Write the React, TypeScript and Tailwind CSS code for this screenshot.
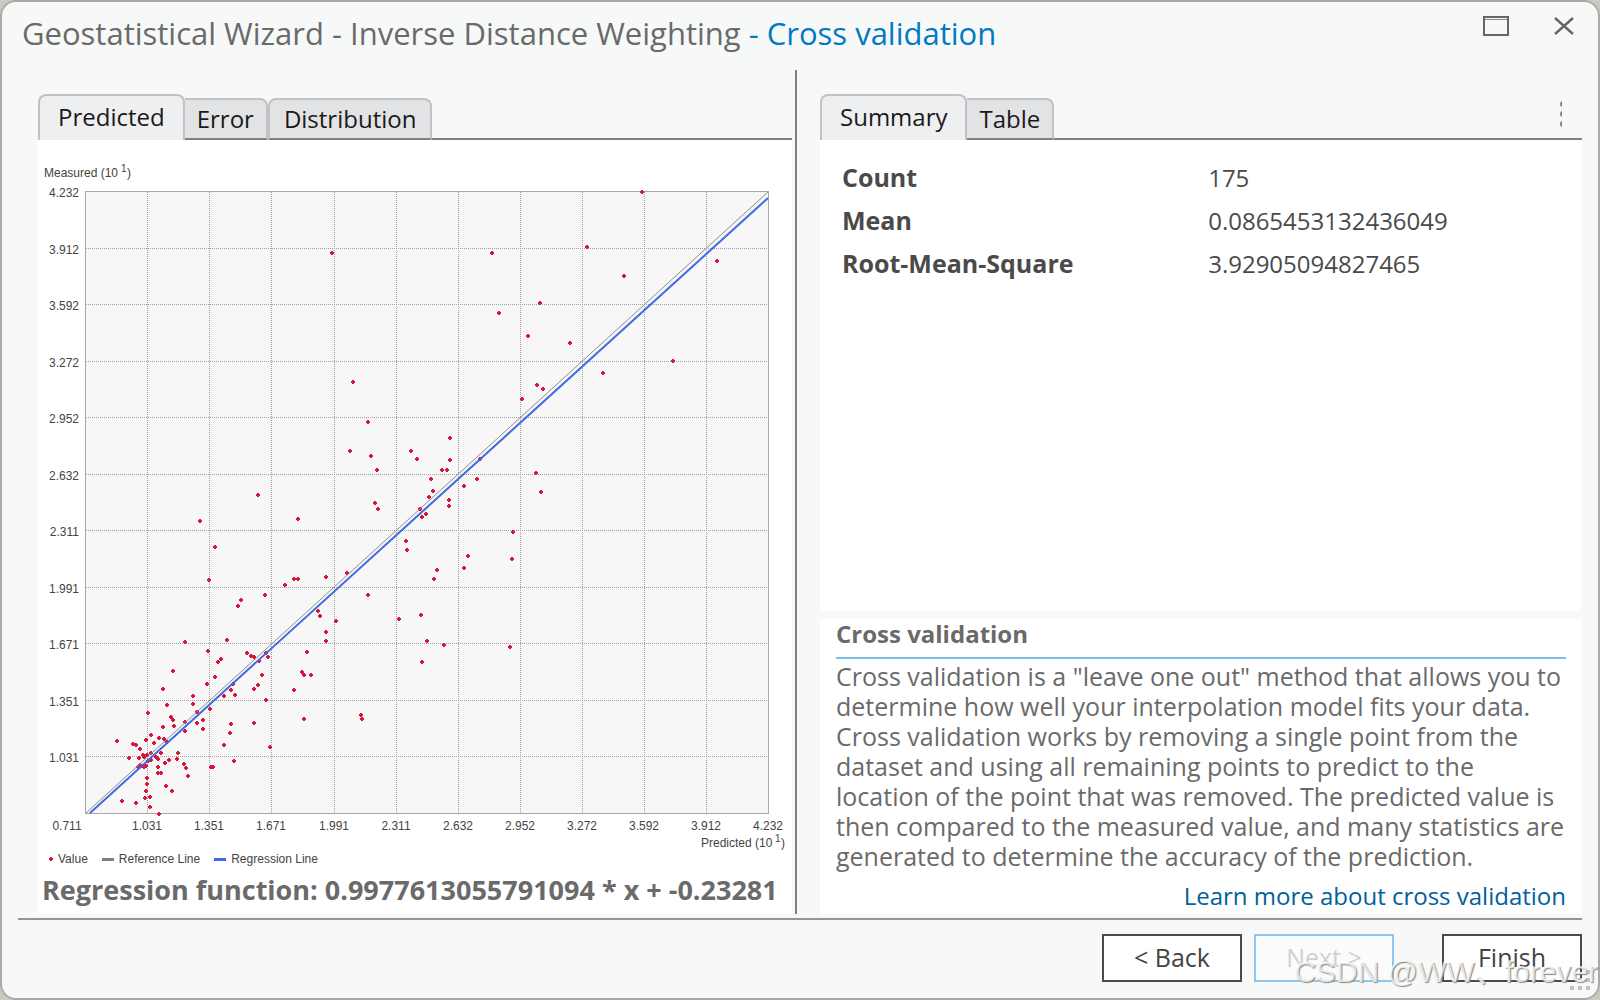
import { useState } from "react";
import { clsx } from "clsx";

const XS = [147, 209, 271, 334, 396, 458, 520, 582, 644, 706];
const YS = [248, 304, 361, 417, 474, 530, 587, 643, 700, 756];

const PLOT = { left: 85, top: 191, right: 768, bottom: 813 };

const X_LABELS: [string, number][] = [
  ["0.711", 67],
  ["1.031", 147],
  ["1.351", 209],
  ["1.671", 271],
  ["1.991", 334],
  ["2.311", 396],
  ["2.632", 458],
  ["2.952", 520],
  ["3.272", 582],
  ["3.592", 644],
  ["3.912", 706],
  ["4.232", 768],
];

const Y_LABELS: [string, number][] = [
  ["4.232", 191],
  ["3.912", 248],
  ["3.592", 304],
  ["3.272", 361],
  ["2.952", 417],
  ["2.632", 474],
  ["2.311", 530],
  ["1.991", 587],
  ["1.671", 643],
  ["1.351", 700],
  ["1.031", 756],
];

// sample points in plot units
const POINTS: [number, number][] = [
  [332, 253], [353, 382], [368, 422], [350, 451], [371, 456], [377, 470], [411, 451], [417, 459],
  [258, 495], [375, 503], [378, 509], [200, 521], [298, 519], [642, 192], [587, 247], [492, 253],
  [717, 261], [624, 276], [499, 313], [540, 303], [528, 336], [570, 343], [673, 361], [603, 373],
  [537, 385], [543, 389], [522, 399], [450, 438], [450, 460], [442, 470], [447, 470], [480, 459],
  [431, 479], [477, 479], [464, 486], [536, 473], [541, 492], [433, 491], [429, 497], [449, 500],
  [449, 506], [420, 509], [426, 514], [422, 517], [215, 547], [209, 580], [294, 579], [298, 579],
  [326, 577], [285, 585], [265, 595], [241, 600], [238, 606], [318, 611], [320, 616], [326, 632],
  [326, 641], [185, 642], [227, 640], [208, 651], [221, 659], [218, 662], [247, 653], [251, 656],
  [254, 657], [266, 653], [268, 657], [259, 661], [307, 652], [173, 671], [215, 677], [207, 684],
  [163, 689], [193, 696], [262, 675], [258, 685], [254, 689], [233, 684], [231, 690], [235, 695],
  [224, 696], [266, 700], [302, 672], [304, 675], [311, 675], [294, 690], [406, 541], [407, 550],
  [468, 556], [464, 568], [437, 570], [434, 579], [513, 532], [512, 559], [347, 573], [368, 595],
  [336, 621], [399, 619], [421, 615], [427, 641], [444, 645], [422, 662], [510, 647], [361, 715],
  [362, 719], [304, 719], [167, 705], [148, 713], [193, 704], [197, 712], [185, 722], [197, 723],
  [203, 720], [203, 729], [185, 731], [210, 709], [163, 727], [171, 717], [173, 720], [174, 726],
  [231, 724], [230, 733], [224, 745], [254, 723], [234, 761], [270, 747], [117, 741], [133, 744],
  [136, 745], [151, 735], [146, 740], [154, 743], [159, 738], [164, 739], [167, 742], [140, 749],
  [129, 758], [139, 758], [143, 755], [144, 757], [147, 755], [151, 753], [161, 753], [178, 753],
  [177, 759], [169, 760], [165, 763], [158, 759], [156, 757], [151, 760], [148, 761], [138, 767],
  [140, 765], [142, 766], [144, 767], [146, 766], [158, 767], [158, 773], [161, 773], [184, 764],
  [186, 768], [188, 776], [147, 778], [147, 784], [166, 786], [172, 791], [146, 791], [145, 798],
  [150, 797], [150, 807], [122, 801], [136, 803], [159, 814], [211, 767], [213, 767],
];

const SUMMARY = [
  { label: "Count", value: "175" },
  { label: "Mean", value: "0.0865453132436049" },
  { label: "Root-Mean-Square", value: "3.92905094827465" },
];

function Tabs({ items }: { items: string[] }) {
  const [active, setActive] = useState(0);

  return (
    <div role="tablist" className="flex items-end">
      {items.map((item, i) => (
        <button
          key={item}
          type="button"
          role="tab"
          aria-selected={i === active}
          onClick={() => setActive(i)}
          className={clsx(
            "rounded-t-lg border-2 border-[#c0c2c5] text-2xl text-[#1a1a1a] cursor-pointer",
            i === active
              ? "h-[46px] border-b-0 bg-[#eeeff1] px-[18px] pb-[2px]"
              : "h-[42px] border-b-[#808080] bg-[#e2e3e5]",
            i !== active && (i === active + 1 ? "border-l-0 rounded-tl-none px-3" : "px-[14px]")
          )}
        >
          {item}
        </button>
      ))}
      <div className="grow border-b-2 border-[#808080]" />
    </div>
  );
}

function ScatterPlot() {
  const { left, top, right, bottom } = PLOT;

  return (
    <svg
      viewBox="38 140 754 711"
      className="block w-full fill-[#444] font-['Liberation_Sans',Arial,sans-serif] text-[12px]"
      role="img"
      aria-label="Predicted against measured values"
    >
      <rect x={left + 0.5} y={top + 0.5} width={right - left} height={bottom - top} fill="#f7f7f7" stroke="#a9a9a9" />
      <g stroke="#a0a0a0" strokeDasharray="1 1">
        {XS.map((x) => (
          <line key={x} x1={x + 0.5} y1={top + 1} x2={x + 0.5} y2={bottom} />
        ))}
        {YS.map((y) => (
          <line key={y} x1={left + 1} y1={y + 0.5} x2={right} y2={y + 0.5} />
        ))}
      </g>
      <g fill="#dc143c" shapeRendering="crispEdges">
        {POINTS.map(([x, y]) => (
          <path key={`${x}-${y}`} d={`M${x - 1} ${y - 2}h2v1h1v2h-1v1h-2v-1h-1v-2h1z`} />
        ))}
      </g>
      <line x1="86" y1="813" x2="768" y2="192" stroke="#8c8c8c" />
      <line x1="90" y1="813" x2="768" y2="198" stroke="#4169e1" strokeWidth="2" />

      <text x="44" y="177">
        Measured (10
      </text>
      <text x="121" y="172" className="text-[10px]">
        1
      </text>
      <text x="127" y="177">
        )
      </text>
      {Y_LABELS.map(([label, y]) => (
        <text key={label} x="79" y={y + 6} textAnchor="end">
          {label}
        </text>
      ))}
      {X_LABELS.map(([label, x]) => (
        <text key={label} x={x} y="830" textAnchor="middle">
          {label}
        </text>
      ))}
      <text x="701" y="847">
        Predicted (10
      </text>
      <text x="775" y="842" className="text-[10px]">
        1
      </text>
      <text x="781" y="847">
        )
      </text>
    </svg>
  );
}

function Legend() {
  return (
    <div className="flex items-center gap-[14px] pl-[11px] font-['Liberation_Sans',Arial,sans-serif] text-[12px] leading-4 text-[#444]">
      <span className="flex items-center gap-[5px]">
        <svg width="4" height="4" fill="#dc143c">
          <path d="M1 0h2v1h1v2h-1v1h-2v-1h-1v-2h1z" />
        </svg>
        Value
      </span>
      <span className="flex items-center gap-[5px]">
        <i className="h-[3px] w-3 bg-[#808080]" />
        Reference Line
      </span>
      <span className="flex items-center gap-[5px]">
        <i className="h-[3px] w-3 bg-[#4169e1]" />
        Regression Line
      </span>
    </div>
  );
}

export default function App() {
  return (
    <div className="min-h-screen bg-[#c9cbc0] flex flex-col font-['Open_Sans','Noto_Sans',sans-serif]">
      <div className="relative grow flex flex-col rounded-2xl border-2 border-[#a9aba9] bg-[#f7f9f8] pl-4 pr-4">
        {/* Title bar */}
        <header className="flex h-[68px] items-start justify-between pl-1 pr-2">
          <h1 className="pt-[9px] text-[31px] leading-11 text-[#6a6a6a]">
            Geostatistical Wizard - Inverse Distance Weighting <span className="text-[#007ac2]">- Cross validation</span>
          </h1>
          <div className="flex gap-[45px] pt-[14px]">
            <button type="button" aria-label="Maximize" className="cursor-pointer">
              <svg width="26" height="20" className="block">
                <rect x="1" y="1" width="24" height="18" fill="none" stroke="#666" strokeWidth="2" />
                <path d="M2 3.5h22" stroke="#888" />
              </svg>
            </button>
            <button type="button" aria-label="Close" className="cursor-pointer">
              <svg width="20" height="20" className="block">
                <path d="M1 2L19 18M19 2L1 18" stroke="#666" strokeWidth="2.4" />
              </svg>
            </button>
          </div>
        </header>

        <main className="grow flex pl-5">
          {/* Chart */}
          <section className="flex min-w-0 flex-[754] flex-col pt-6">
            <Tabs items={["Predicted", "Error", "Distribution"]} />
            <div className="grow bg-white">
              <ScatterPlot />
              <Legend />
              <p className="overflow-hidden whitespace-nowrap pl-1 pt-[5px] text-[27px] font-bold leading-9 text-[#6a6a6a]">
                Regression function: 0.9977613055791094 * x + -0.23281
              </p>
            </div>
          </section>

          <div className="ml-[3px] mr-[23px] w-[2px] bg-[#808080]" />

          {/* Results */}
          <section className="flex min-w-0 flex-[762] flex-col pt-6">
            <div className="relative">
              <Tabs items={["Summary", "Table"]} />
              <button type="button" aria-label="More options" className="absolute right-5 top-[6px] cursor-pointer">
                <svg width="2" height="27" className="block" fill="#808080">
                  <circle cx="3" cy="4" r="3" />
                  <circle cx="3" cy="14" r="3" />
                  <circle cx="3" cy="24" r="3" />
                </svg>
              </button>
            </div>
            <div className="grow bg-white px-[22px] pt-4">
              <table className="w-full text-2xl text-[#4a4a4a]">
                <tbody>
                  {SUMMARY.map((row) => (
                    <tr key={row.label} className="h-[43px]">
                      <th scope="row" className="w-[51%] text-left text-[25px] font-bold">
                        {row.label}
                      </th>
                      <td>{row.value}</td>
                    </tr>
                  ))}
                </tbody>
              </table>
            </div>
            <div className="mt-2 bg-white px-4 pb-[3px] text-2xl leading-[30px] text-[#6a6a6a]">
              <h2 className="border-b-2 border-[#78bfee] pb-2 font-bold">Cross validation</h2>
              <p className="pt-[2px] text-[25px] leading-[30px]">
                Cross validation is a "leave one out" method that allows you to determine how well your interpolation
                model fits your data. Cross validation works by removing a single point from the dataset and using all
                remaining points to predict to the location of the point that was removed. The predicted value is then
                compared to the measured value, and many statistics are generated to determine the accuracy of the
                prediction.
              </p>
              <p className="pt-[10px] text-right">
                <a href="#cross-validation" className="text-[#00619b]">
                  Learn more about cross validation
                </a>
              </p>
            </div>
          </section>
        </main>

        {/* Wizard buttons */}
        <footer className="mt-1 flex justify-end gap-3 border-t-2 border-[#949494] pb-4 pt-[14px] text-[25px] text-[#444]">
          <button type="button" className="flex h-12 w-[140px] items-center justify-center border-2 border-[#4a4a4a] bg-white cursor-pointer">
            &lt; Back
          </button>
          <button
            type="button"
            disabled
            className="flex h-12 w-[140px] items-center justify-center border-2 border-[#8fc6ee] bg-[#fafcfb] text-[#d0d0d0]"
          >
            Next &gt;
          </button>
          <button type="button" className="ml-9 flex h-12 w-[140px] items-center justify-center border-2 border-[#4a4a4a] bg-white cursor-pointer">
            Finish
          </button>
        </footer>

        <svg width="20" height="20" fill="#c0c2c4" className="absolute bottom-2 right-2">
          <path d="M0 16h4v4h-4zM8 16h4v4h-4zM16 16h4v4h-4zM8 8h4v4h-4zM16 8h4v4h-4zM16 0h4v4h-4z" />
        </svg>
        <div className="pointer-events-none absolute bottom-[6px] right-0 whitespace-nowrap font-['Liberation_Sans','Noto_Sans_CJK_SC',sans-serif] text-[30px] leading-10 text-white/75 [text-shadow:1px_1px_1px_#888]">
          CSDN @WW、forever
        </div>
      </div>
    </div>
  );
}
